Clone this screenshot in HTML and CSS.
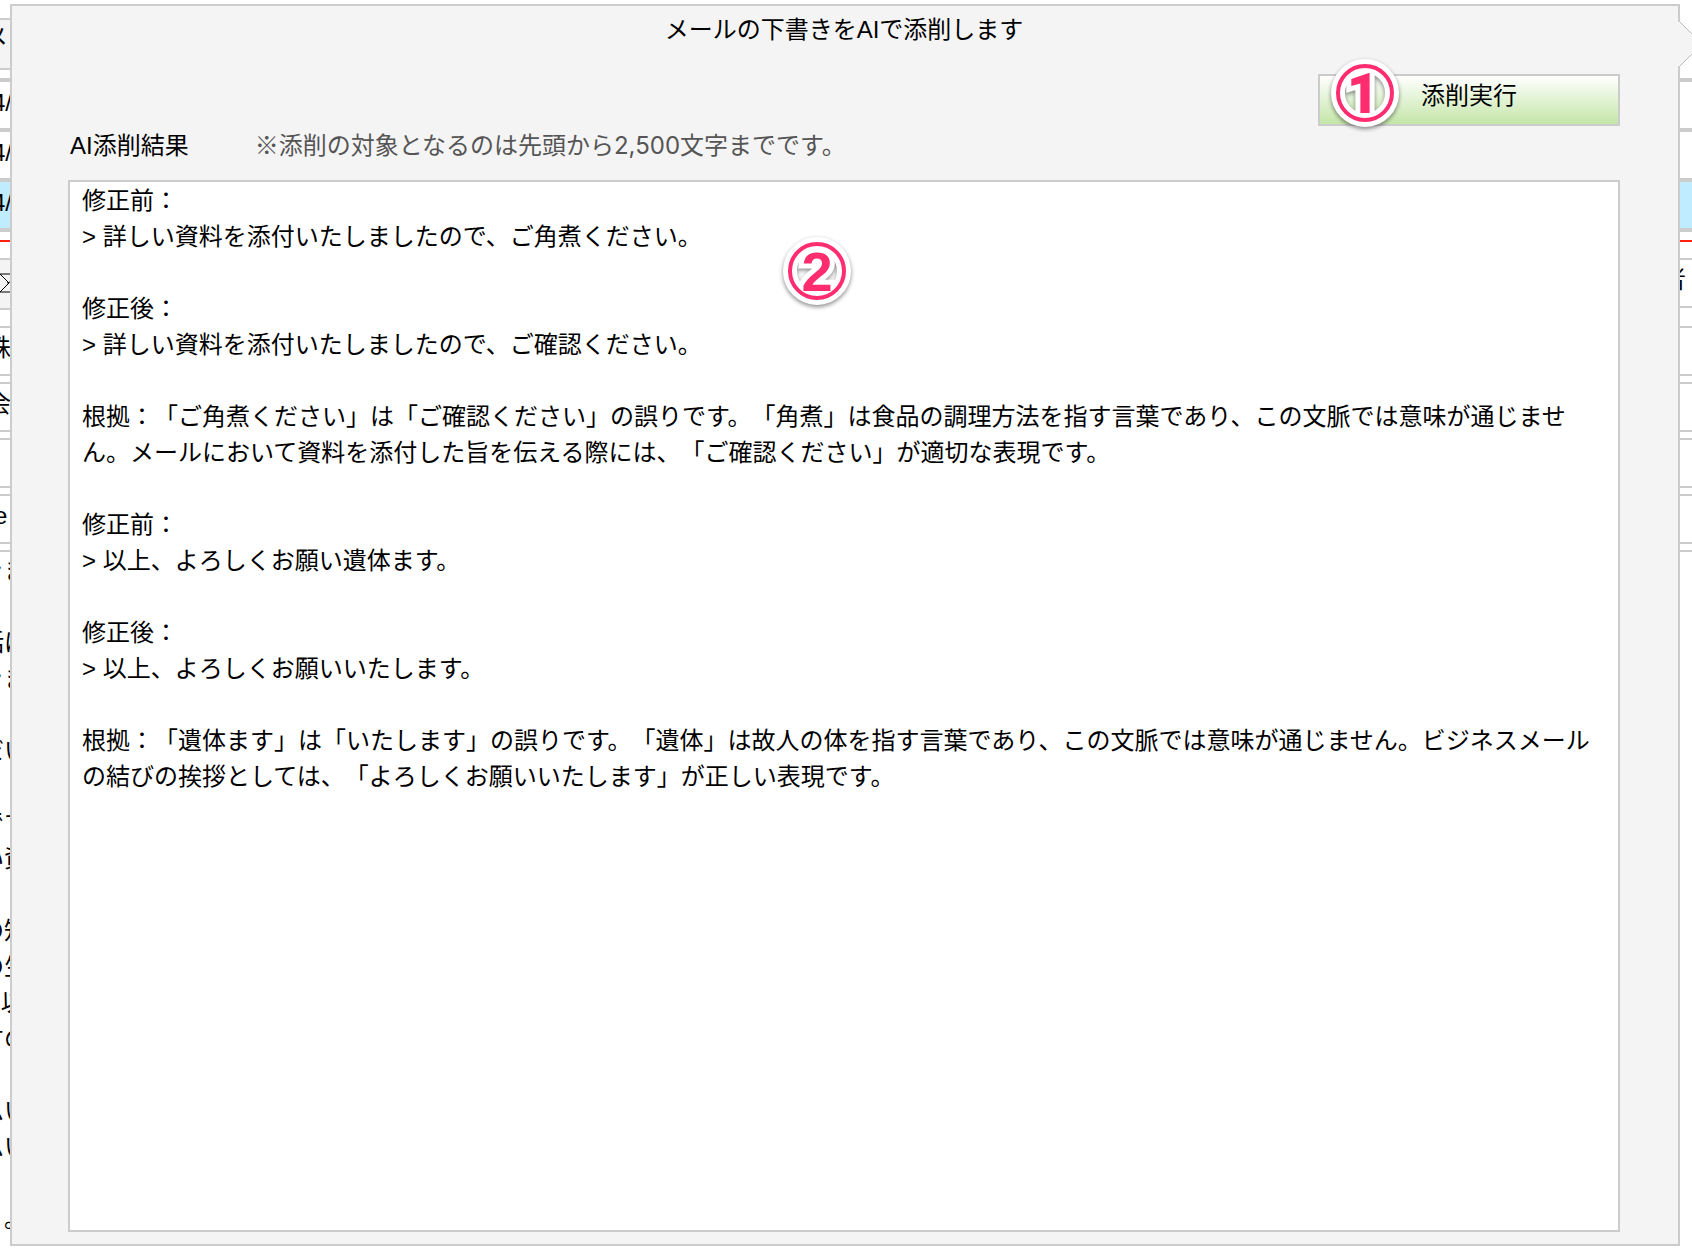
FILE: index.html
```html
<!DOCTYPE html>
<html lang="ja">
<head>
<meta charset="utf-8">
<meta name="viewport" content="width=device-width, initial-scale=1">
<title>AI添削</title>
<link rel="stylesheet" href="styles.css">
</head>
<body>
<main class="backdrop">
  <div class="toolbar"><div class="tool tool-label">メ</div></div>
  <div class="list">
    <div class="list-row">4/</div>
    <div class="list-row">4/</div>
    <div class="list-row selected">4/</div>
  </div>
  <hr class="divider">
  <div class="address-bar">
    <div class="mail-box">
      <svg class="mail-icon" viewBox="0 0 10 20" aria-hidden="true"><path d="M0 1H10M0 19H10M0 1L9 10L0 19M7 10L10 9" fill="none" stroke="#000" stroke-width="1"/></svg>
    </div>
    <div class="person">者</div>
  </div>
  <div class="fields">
    <div class="field wide">株</div>
    <div class="field wide">会</div>
    <div class="field"></div>
    <div class="field latin">e</div>
  </div>
  <div class="draft">きま

話は
きま

だい

です
い資

の知
の生
&gt; 以
すの

ムい
ムい

　。</div>
</main>

<section class="popup" aria-labelledby="popup-title">
  <svg class="pointer" viewBox="0 0 24 46" aria-hidden="true"><path d="M0 1H2L24 23L2 45H0Z" fill="#f4f4f4"/><path d="M2 1L24 23L2 45" fill="none" stroke="#bbb"/></svg>
  <h1 class="title" id="popup-title">メールの下書きをAIで添削します</h1>
  <div class="actions">
    <button class="run" type="button">添削実行</button>
    <svg class="badge badge-run" viewBox="0 0 76 76" aria-hidden="true">
      <g class="halo"><circle cx="38" cy="36" r="27"/><text class="one" x="36" y="56">1</text></g>
      <g class="mark"><circle cx="38" cy="36" r="27"/><text class="one" x="36" y="56">1</text></g>
    </svg>
  </div>
  <div class="caption">
    <label class="caption-label" for="result">AI添削結果</label>
    <span class="note">※添削の対象となるのは先頭から<span class="count">2,500</span>文字までです。</span>
  </div>
  <div class="result-area">
    <textarea class="result" id="result" spellcheck="false" readonly>修正前：
&gt; 詳しい資料を添付いたしましたので、ご角煮ください。

修正後：
&gt; 詳しい資料を添付いたしましたので、ご確認ください。

根拠：「ご角煮ください」は「ご確認ください」の誤りです。「角煮」は食品の調理方法を指す言葉であり、この文脈では意味が通じません。メールにおいて資料を添付した旨を伝える際には、「ご確認ください」が適切な表現です。

修正前：
&gt; 以上、よろしくお願い遺体ます。

修正後：
&gt; 以上、よろしくお願いいたします。

根拠：「遺体ます」は「いたします」の誤りです。「遺体」は故人の体を指す言葉であり、この文脈では意味が通じません。ビジネスメールの結びの挨拶としては、「よろしくお願いいたします」が正しい表現です。</textarea>
    <svg class="badge badge-result" viewBox="0 0 76 76" aria-hidden="true">
      <g class="halo"><circle cx="38" cy="36" r="27"/><text class="two" x="38" y="56">2</text></g>
      <g class="mark"><circle cx="38" cy="36" r="27"/><text class="two" x="38" y="56">2</text></g>
    </svg>
  </div>
</section>
</body>
</html>
```
FILE: styles.css
```css
* { box-sizing: border-box; }

body {
  position: relative;
  margin: 0;
  height: 100vh;
  overflow: hidden;
  background: #fff;
  color: #000;
  font: 24px/36px "Liberation Sans", "Noto Sans CJK JP", sans-serif;
  text-spacing-trim: space-all;
}

/* mail screen behind the popup */
.backdrop {
  display: flex;
  flex-direction: column;
  height: 100%;
  overflow: hidden;
}
.toolbar { padding: 18px 0 8px; }
.tool {
  width: 50%;
  height: 52px;
  border: solid #ccc;
  border-width: 2px 0;
  background: #f4f4f4;
}
.tool-label { text-indent: -16px; }
.list { border-top: 4px solid #ccc; }
.list-row {
  height: 50px;
  padding-top: 3px;
  border-bottom: 4px solid #ccc;
  text-indent: -8px;
}
.selected { background: #bfecff; }
.divider {
  width: 100%;
  margin: 8px 0 16px;
  border: 0;
  border-top: 2px solid #ff2010;
}
.address-bar {
  display: flex;
  align-items: flex-start;
  height: 52px;
  margin-bottom: 16px;
}
.mail-box, .person {
  flex: 1;
  border: solid #ccc;
  border-width: 2px 0;
}
.mail-box {
  height: 52px;
  padding-top: 13px;
  background: #f4f4f4;
}
.mail-icon {
  display: block;
  width: 10px;
  height: 20px;
}
.person {
  height: 50px;
  padding: 2px 6px 0 0;
  text-align: right;
}
.fields {
  display: grid;
  gap: 6px;
}
.field {
  height: 50px;
  padding-top: 2px;
  border: solid #ccc;
  border-width: 2px 0;
}
.wide { text-indent: -13px; }
.latin { text-indent: -6px; }
.draft {
  flex: 1;
  margin: 6px 0 0 -20px;
  padding-top: 1px;
  border-top: 2px solid #ccc;
  white-space: pre;
}

/* popup */
.popup {
  position: absolute;
  inset: 4px 12px 8px 10px;
  display: flex;
  flex-direction: column;
  padding: 2px 58px 12px 56px;
  border: 2px solid #ccc;
  background: #f4f4f4;
}
.pointer {
  position: absolute;
  top: 15px;
  left: 100%;
  width: 24px;
  height: 46px;
}
.title {
  margin: 0 0 22px;
  font-size: 24px;
  font-weight: 400;
  line-height: 44px;
  text-align: center;
}
.actions {
  position: relative;
  align-self: flex-end;
  width: 302px;
}
.run {
  display: block;
  width: 100%;
  height: 52px;
  padding: 0 0 8px;
  border: 2px solid #ccc;
  background: linear-gradient(#fff, #c4e6a8);
  color: #000;
  font: inherit;
}
.caption {
  display: flex;
  gap: 66px;
  height: 36px;
  margin: 2px 0 16px;
  padding-left: 2px;
}
.note { color: #555; }
.count { font-family: Inter, sans-serif; }
.result-area {
  position: relative;
  display: flex;
  flex: 1;
}
.result {
  width: 100%;
  padding: 1px 12px;
  border: 2px solid #ccc;
  outline: 0;
  background: #fff;
  color: #000;
  font: inherit;
  text-spacing-trim: inherit;
  resize: none;
}

/* numbered callouts */
.badge {
  position: absolute;
  width: 76px;
  height: 76px;
}
.badge-run { top: -17px; left: 9px; }
.badge-result { top: 55px; left: 711px; }
.badge circle { fill: none; stroke-width: 4px; }
.badge text {
  font-size: 56px;
  font-weight: 700;
  text-anchor: middle;
}
.badge .one { font-family: Roboto, sans-serif; font-weight: 900; }
.badge .two { font-family: "Liberation Sans", sans-serif; }
.mark circle { stroke: #ff2d6f; }
.mark text { fill: #ff2d6f; }
.halo { filter: drop-shadow(0 2px 2px rgba(0, 0, 0, 0.45)); }
.halo circle { stroke: #fff; stroke-width: 14px; }
.halo text {
  fill: #fff;
  stroke: #fff;
  stroke-width: 10px;
}
```
